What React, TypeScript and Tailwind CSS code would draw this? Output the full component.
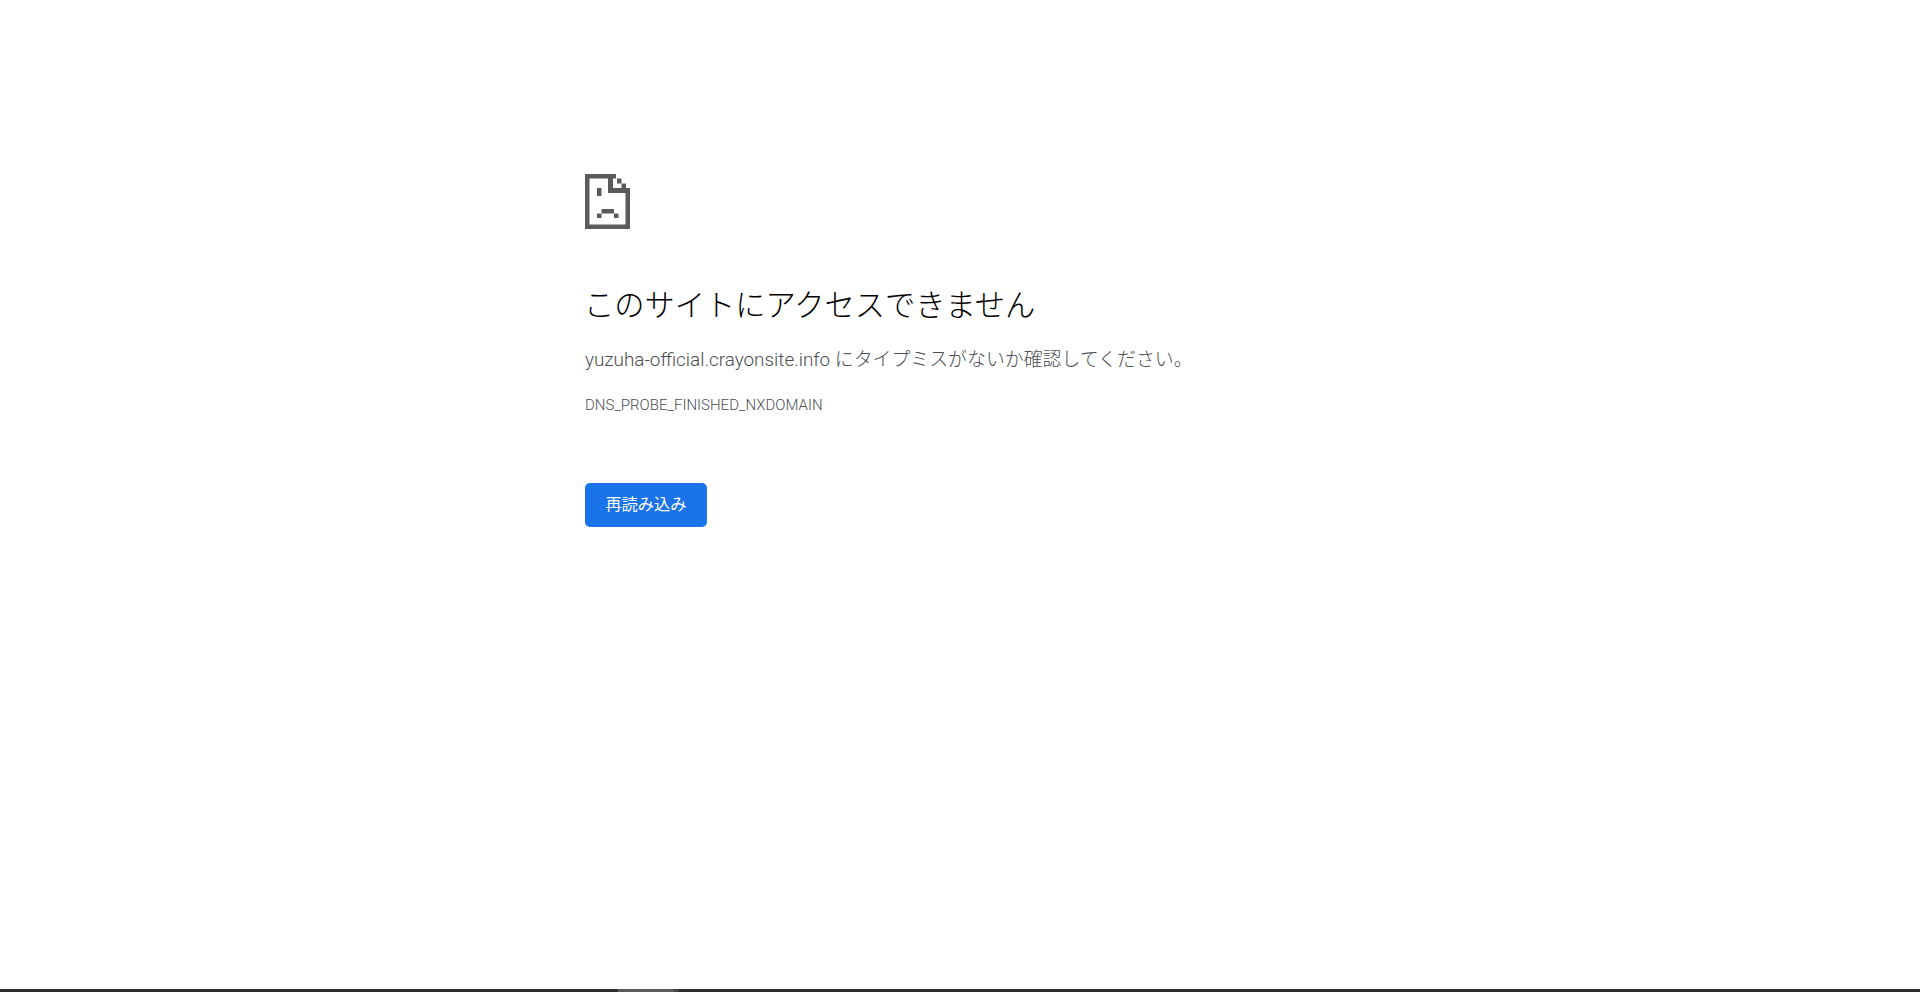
import React from 'react';

const INK = '#5b5b5b';

function SadPage() {
  return (
    <svg width="45" height="55" viewBox="0 0 45 55" fill={INK}>
      <path fillRule="evenodd" d="M0 0H31V4.5H28V14H45V55H0ZM4.5 4.5V50.5H40.5V19H23V4.5Z" />
      <rect x="32" y="4.5" width="4.5" height="5" />
      <rect x="36.5" y="9.5" width="4.5" height="4.5" />
      <rect x="12" y="14" width="4.5" height="8" />
      <rect x="16.5" y="35" width="12.5" height="4.5" />
      <rect x="12" y="39.5" width="4.5" height="4.5" />
      <rect x="29" y="39.5" width="4.5" height="4.5" />
    </svg>
  );
}

export default function App() {
  return (
    <div className="flex h-screen flex-col bg-white font-['Roboto','Noto_Sans_CJK_JP',sans-serif]">
      <main className="flex-1 overflow-hidden">
        <div className="mx-auto w-[750px] pt-[174px]">
          <SadPage />
          <h1 className="mt-[54px] -ml-[1px] text-[30.25px] leading-[45px] font-light text-[#000000]">
            このサイトにアクセスできません
          </h1>
          <p className="mt-[18px] text-[18.9px] leading-[28px] font-light text-[#4a4d51]">
            yuzuha-official.crayonsite.info にタイプミスがないか確認してください。
          </p>
          <div className="mt-[21px] text-[15px] leading-[20px] font-light text-[#4a4d51]">
            DNS_PROBE_FINISHED_NXDOMAIN
          </div>
          <button className="mt-[68px] h-[44px] w-[122px] rounded-[5px] bg-[#1a73e8] text-[16.25px] font-normal text-white">
            再読み込み
          </button>
        </div>
      </main>
      <div className="flex h-[3px] bg-[#2e2e2e]">
        <div className="ml-[618px] w-[56px] bg-[#5a5a5a]" />
        <div className="w-[5px] bg-[#444444]" />
      </div>
    </div>
  );
}
